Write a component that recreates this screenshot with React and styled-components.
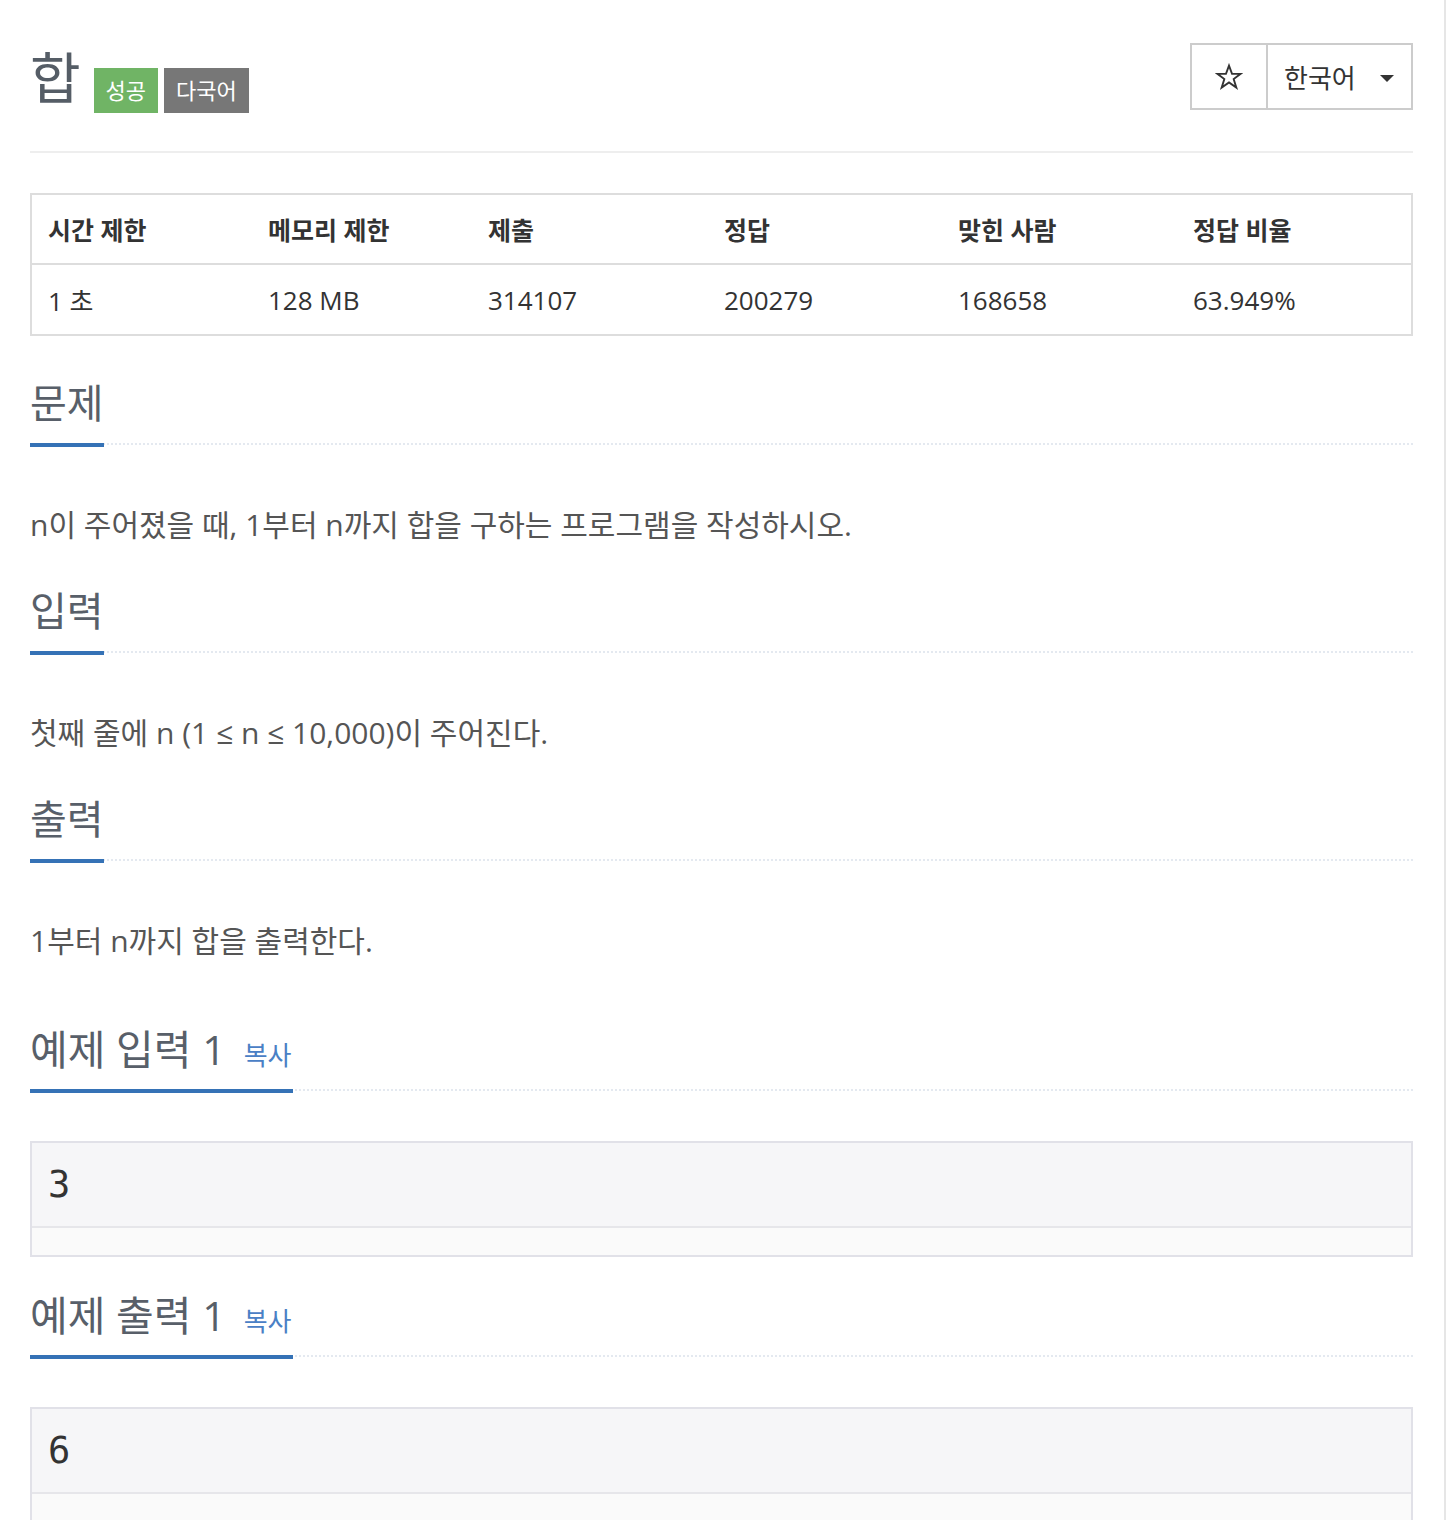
import styled, { createGlobalStyle } from 'styled-components';

const GlobalStyle = createGlobalStyle`
  html, body {
    margin: 0;
    padding: 0;
    background: #fff;
    overflow: hidden;
  }
  body {
    font-family: "Open Sans", "Noto Sans CJK KR", sans-serif;
    color: #333;
  }
  * { box-sizing: border-box; }
`;

const Page = styled.div`
  width: 1446px;
  min-height: 1520px;
  padding: 43px 31px 0 30px;
  border-right: 2px solid #e6e6e6;
`;

const Header = styled.header`
  display: flex;
  justify-content: space-between;
  align-items: flex-start;
  padding-bottom: 38px;
  border-bottom: 2px solid #eee;
`;

const TitleRow = styled.div`
  display: flex;
  align-items: flex-end;
  height: 70px;
`;

const Title = styled.h1`
  margin: 0 13px 9px 0;
  font-size: 55px;
  line-height: 1;
  font-weight: 400;
  color: #555d66;
`;

const Label = styled.span`
  display: inline-block;
  height: 45px;
  line-height: 45px;
  padding: 0 12px;
  margin-right: 6px;
  font-size: 22px;
  color: #fff;
  background: ${p => p.$bg};
`;

const BtnGroup = styled.div`
  display: flex;
  height: 67px;
  border: 2px solid #ccc;
`;

const StarBtn = styled.div`
  width: 76px;
  display: flex;
  align-items: center;
  justify-content: center;
  border-right: 2px solid #ccc;
`;

const LangBtn = styled.div`
  width: 143px;
  display: flex;
  align-items: center;
  justify-content: space-between;
  padding: 0 17px 0 16px;
  font-size: 26px;
  color: #333;
`;

const Caret = styled.span`
  width: 0;
  height: 0;
  border-left: 7px solid transparent;
  border-right: 7px solid transparent;
  border-top: 7px solid #333;
  margin-top: 3px;
`;

const Table = styled.div`
  margin-top: 40px;
  border: 2px solid #ddd;
`;

const Row = styled.div`
  display: grid;
  grid-template-columns: 220px 220px 236px 234px 235px 1fr;
  height: ${p => (p.$head ? 70 : 69)}px;
  align-items: center;
  border-bottom: ${p => (p.$head ? '2px solid #ddd' : 'none')};
`;

const Cell = styled.div`
  padding: 0 16px;
  font-size: ${p => (p.$head ? 25 : 26)}px;
  font-weight: ${p => (p.$head ? 700 : 400)};
  color: #333;
`;

const Headline = styled.div`
  margin-top: ${p => p.$top || 30}px;
  border-bottom: 2px dotted #e4e9f0;
`;

const H2 = styled.h2`
  display: inline-block;
  margin: 0 0 -4px 0;
  padding-bottom: 14px;
  font-size: ${p => p.$size || 40}px;
  line-height: 52px;
  font-weight: 400;
  color: #585f69;
  border-bottom: 4px solid #3572b6;
  white-space: nowrap;
`;

const CopyLink = styled.a`
  font-size: 26px;
  line-height: 1;
  color: #4a80c5;
  text-decoration: none;
  margin-left: 18px;
  margin-right: 2px;
`;

const Text = styled.p`
  margin: 50px 0 0 0;
  font-size: 30px;
  line-height: 60px;
  color: #555;
`;

const SampleBox = styled.div`
  margin-top: 50px;
  border: 2px solid #e1e1e8;
  background: #f6f6f8;
`;

const SampleData = styled.pre`
  margin: 0;
  height: 83px;
  padding: 0 16px;
  display: flex;
  align-items: center;
  font-family: "DejaVu Sans Mono", monospace;
  font-size: 37px;
  color: #333;
`;

const ScrollStrip = styled.div`
  height: 29px;
  border-top: 2px solid #e6e6ea;
  background: #fafafa;
`;

const StarIcon = () => (
  <svg width="28" height="28" viewBox="0 0 24 24" fill="none" stroke="#333" strokeWidth="1.6" strokeLinejoin="miter">
    <path d="M12 2.2l2.6 7.1h7.4l-6 4.5 2.3 7.3L12 16.6l-6.3 4.5 2.3-7.3-6-4.5h7.4z" />
  </svg>
);

const stats = [
  ['시간 제한', '1 초'],
  ['메모리 제한', '128 MB'],
  ['제출', '314107'],
  ['정답', '200279'],
  ['맞힌 사람', '168658'],
  ['정답 비율', '63.949%'],
];

const sections = [
  { title: '문제', text: 'n이 주어졌을 때, 1부터 n까지 합을 구하는 프로그램을 작성하시오.', top: 41 },
  { title: '입력', text: '첫째 줄에 n (1 ≤ n ≤ 10,000)이 주어진다.' },
  { title: '출력', text: '1부터 n까지 합을 출력한다.' },
];

const samples = [
  { title: '예제 입력 1', data: '3', top: 52 },
  { title: '예제 출력 1', data: '6', top: 32 },
];

export default function App() {
  return (
    <>
      <GlobalStyle />
      <Page>
        <Header>
          <TitleRow>
            <Title>합</Title>
            <Label $bg="#70b465">성공</Label>
            <Label $bg="#777">다국어</Label>
          </TitleRow>
          <BtnGroup>
            <StarBtn><StarIcon /></StarBtn>
            <LangBtn>
              <span>한국어</span>
              <Caret />
            </LangBtn>
          </BtnGroup>
        </Header>

        <Table>
          <Row $head>
            {stats.map(([h]) => <Cell key={h} $head>{h}</Cell>)}
          </Row>
          <Row>
            {stats.map(([h, v]) => <Cell key={h}>{v}</Cell>)}
          </Row>
        </Table>

        {sections.map(s => (
          <section key={s.title}>
            <Headline $top={s.top}>
              <H2>{s.title}</H2>
            </Headline>
            <Text>{s.text}</Text>
          </section>
        ))}

        {samples.map(s => (
          <section key={s.title}>
            <Headline $top={s.top}>
              <H2 $size={41}>
                {s.title}
                <CopyLink href="#">복사</CopyLink>
              </H2>
            </Headline>
            <SampleBox>
              <SampleData>{s.data}</SampleData>
              <ScrollStrip />
            </SampleBox>
          </section>
        ))}
      </Page>
    </>
  );
}
